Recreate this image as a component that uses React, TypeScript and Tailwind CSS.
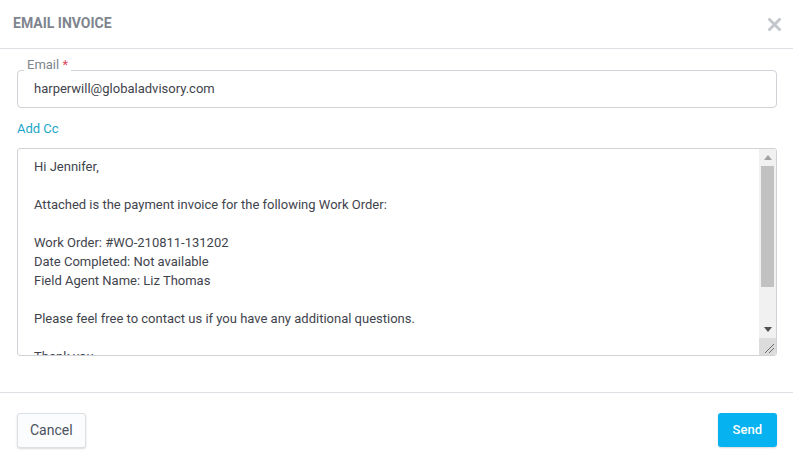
const body = `Hi Jennifer,

Attached is the payment invoice for the following Work Order:

Work Order: #WO-210811-131202
Date Completed: Not available
Field Agent Name: Liz Thomas

Please feel free to contact us if you have any additional questions.

Thank you,
Global Advisory`

function FakeScrollbar() {
  return (
    <div className="w-[17px] flex flex-col bg-[#f1f1f1]">
      {/* up arrow */}
      <div className="h-[17px] flex items-center justify-center">
        <svg width="8" height="5" viewBox="0 0 8 5">
          <path d="M0 5 L4 0 L8 5 Z" fill="#a3a3a3" />
        </svg>
      </div>
      {/* thumb */}
      <div className="h-[121px] mx-[2px] bg-[#c1c1c1]" />
      <div className="flex-1" />
      {/* down arrow */}
      <div className="h-[17px] flex items-center justify-center">
        <svg width="8" height="5" viewBox="0 0 8 5">
          <path d="M0 0 L8 0 L4 5 Z" fill="#505050" />
        </svg>
      </div>
      {/* resize grip */}
      <div className="h-[17px] bg-[#dcdcdc] flex items-end justify-end rounded-br-[3px]">
        <svg width="17" height="17" viewBox="0 0 17 17">
          <path d="M6 15 L15 6 M10 15 L15 10" stroke="#6b6b6b" strokeWidth="1" />
        </svg>
      </div>
    </div>
  )
}

export default function App() {
  return (
    <div className="w-[793px] h-[464px] bg-white font-['Roboto',sans-serif] flex flex-col">
      {/* Header */}
      <div className="h-[49px] shrink-0 border-b border-[#dde0e4] flex items-center justify-between pl-[13px] pr-[12px] pb-[2px]">
        <h2 className="text-[14px] font-bold text-[#7e858e]">EMAIL INVOICE</h2>
        <svg width="13" height="13" viewBox="0 0 13 13" className="mt-[2px]">
          <path d="M1.5 1.5 L11.5 11.5 M11.5 1.5 L1.5 11.5" stroke="#c4c7cc" strokeWidth="3" strokeLinecap="square" />
        </svg>
      </div>

      {/* Body */}
      <div className="flex-1 pl-[17px] pr-[16px] pt-[21px]">
        <div className="relative h-[38px] border border-[#cfd3d8] rounded-[4px] flex items-center pl-[16px] pb-[1px]">
          <span className="absolute left-[6px] -top-[14px] bg-white px-[3px] text-[13px] leading-[15px] text-[#80868e]">
            Email <span className="text-[#e5485c]">*</span>
          </span>
          <span className="text-[13px] text-[#3f444d] leading-[20px]">harperwill@globaladvisory.com</span>
        </div>

        <div className="mt-[13px] text-[13px] text-[#1aa6c8] leading-[16px]">Add Cc</div>

        <div className="mt-[11px] h-[208px] border border-[#cfd3d8] rounded-[3px] flex overflow-hidden">
          <textarea
            className="flex-1 resize-none overflow-hidden pl-[16px] pr-[8px] pt-[8px] text-[13px] leading-[19px] text-[#3f444d] outline-none"
            defaultValue={body}
          />
          <FakeScrollbar />
        </div>
      </div>

      {/* Footer */}
      <div className="h-[72px] shrink-0 border-t border-[#dde0e4] flex items-start justify-between pl-[17px] pr-[16px] pt-[20px]">
        <button className="h-[35px] px-[12px] border border-[#dcdfe3] rounded-[3px] bg-[#fbfcfd] shadow-[0_1px_2px_rgba(0,0,0,0.15)] text-[14px] text-[#4c5260]">
          Cancel
        </button>
        <button className="h-[34px] px-[15px] rounded-[3px] bg-[#06b2ef] shadow-[0_1px_2px_rgba(0,0,0,0.15)] text-[13px] font-medium text-white">
          Send
        </button>
      </div>
    </div>
  )
}
